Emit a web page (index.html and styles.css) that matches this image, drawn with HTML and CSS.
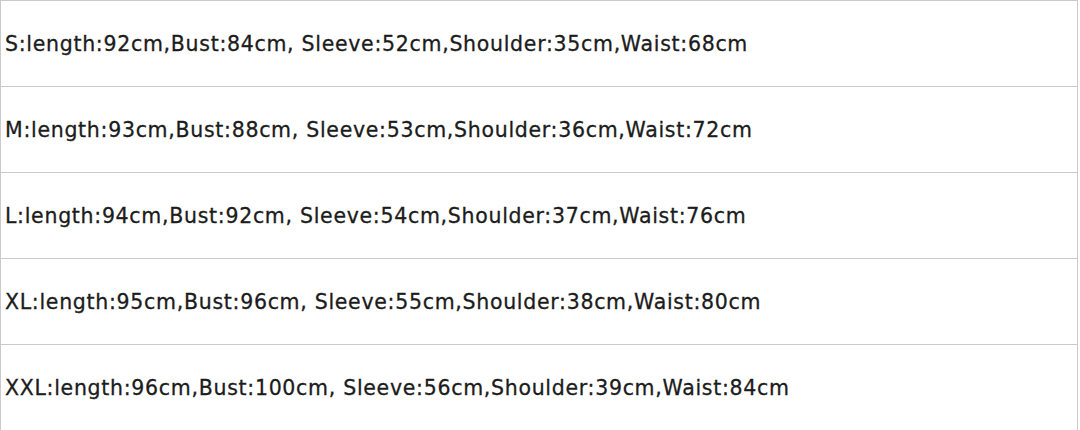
FILE: index.html
```html
<!DOCTYPE html>
<html lang="en">
<head>
    <meta charset="UTF-8">
    <title>Size Chart</title>
    <link rel="stylesheet" href="styles.css">
</head>
<body>

<table class="size-table">
    <tr><td>S:length:92cm,Bust:84cm, Sleeve:52cm,Shoulder:35cm,Waist:68cm</td></tr>
    <tr><td>M:length:93cm,Bust:88cm, Sleeve:53cm,Shoulder:36cm,Waist:72cm</td></tr>
    <tr><td>L:length:94cm,Bust:92cm, Sleeve:54cm,Shoulder:37cm,Waist:76cm</td></tr>
    <tr><td>XL:length:95cm,Bust:96cm, Sleeve:55cm,Shoulder:38cm,Waist:80cm</td></tr>
    <tr><td>XXL:length:96cm,Bust:100cm, Sleeve:56cm,Shoulder:39cm,Waist:84cm</td></tr>
</table>

</body>
</html>
```

FILE: styles.css
```css
body {
    margin: 0;
    background-color: #ffffff;
    font-family: "DejaVu Sans", Verdana, sans-serif;
    color: #1c1c1c;
}

.size-table {
    width: 1078px;
    border-collapse: collapse;
    border: 1px solid #cacaca;
}

.size-table td {
    height: 85px;
    padding: 0 0 0 4px;
    border-top: 1px solid #cacaca;
    font-size: 20.5px;
    letter-spacing: 0.7px;
    -webkit-text-stroke: 0.3px #1c1c1c;
    vertical-align: middle;
    white-space: nowrap;
}
```
